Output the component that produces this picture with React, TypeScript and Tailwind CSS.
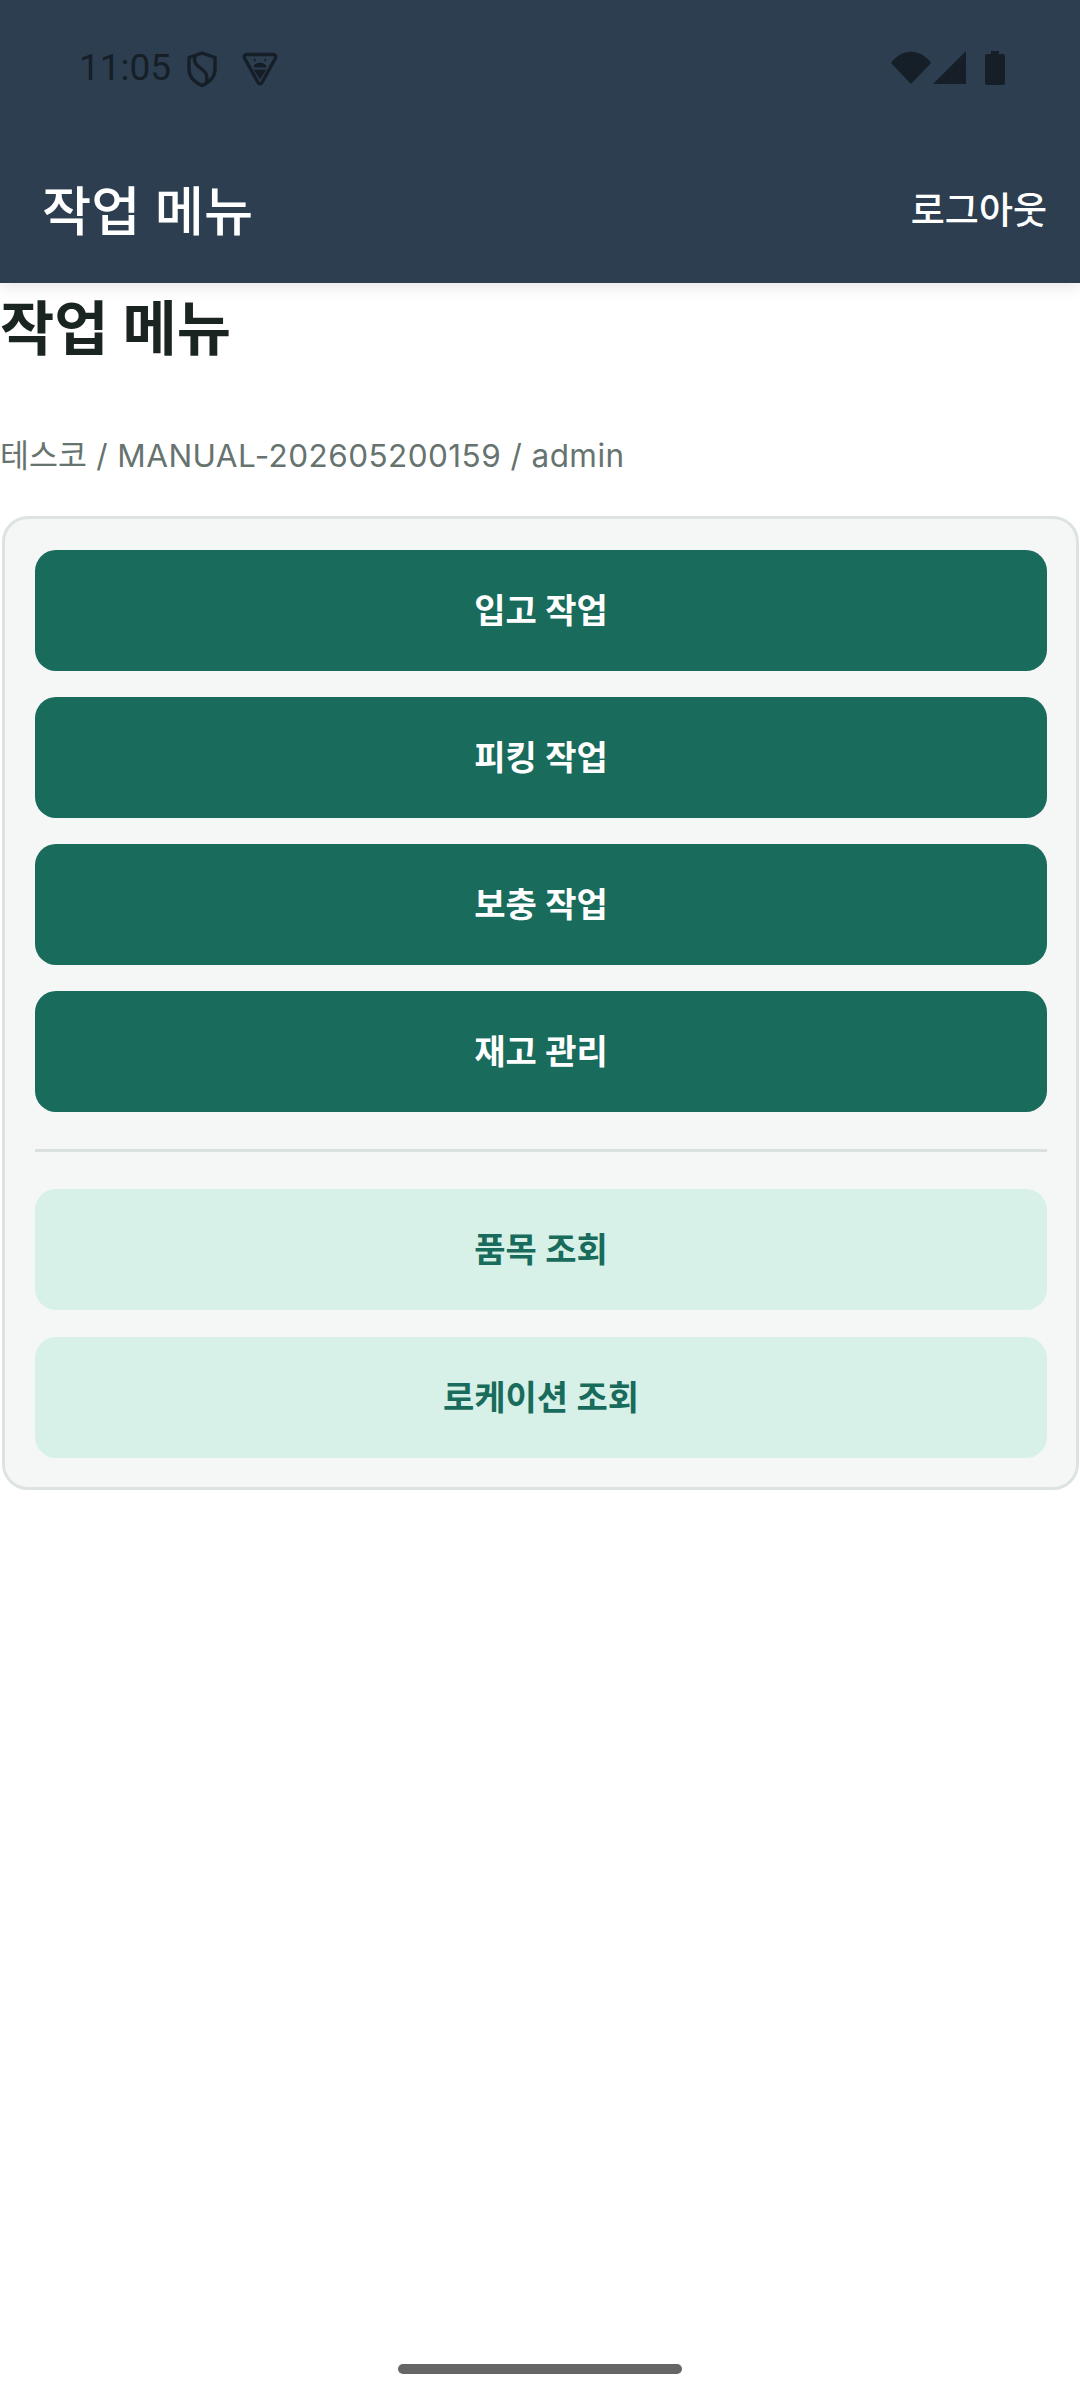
export default function App() {
  const primary = ["입고 작업", "피킹 작업", "보충 작업", "재고 관리"];
  const secondary = ["품목 조회", "로케이션 조회"];
  return (
    <div className="flex h-[2400px] w-[1080px] flex-col overflow-hidden bg-white font-['Inter','Noto_Sans_CJK_KR',sans-serif]">
      <header className="relative z-10 h-[283px] shrink-0 bg-[#2c3e50] shadow-[0_5px_14px_rgba(0,0,0,0.09)]">
        <div className="flex h-[136px] items-start pt-[50px] pl-[79px] pr-[75px] text-[#161e27]">
          <span className="font-['Roboto',sans-serif] text-[37px] leading-[36px]">11:05</span>
          <svg className="ml-[15px] mt-[1px]" width="32" height="36" viewBox="0 0 32 36" fill="none" stroke="currentColor" strokeWidth="3.4" strokeLinejoin="round">
            <path d="M16 2 L29 6.5 V18 C29 26 23 31.5 16 34.5 C9 31.5 3 26 3 18 V6.5 Z" />
            <path d="M9 5 C7 13 12 15 17 19 C22 23 21 28 20.5 32" />
          </svg>
          <svg className="ml-[24px] mt-[2px]" width="36" height="34" viewBox="0 0 36 34" fill="none" stroke="currentColor">
            <path d="M4.5 2.5 H31.5 C33.5 2.5 34.3 4.5 33.5 6 L20 30.5 C19 32.3 17 32.3 16 30.5 L2.5 6 C1.7 4.5 2.5 2.5 4.5 2.5 Z" strokeWidth="3.4" strokeLinejoin="round" />
            <path d="M11.5 15.5 C11.5 9 24.5 9 24.5 15.5 Z" fill="currentColor" stroke="none" />
            <path d="M11.5 17.5 H24.5 L18 27.5 Z" fill="currentColor" stroke="none" />
            <path d="M13.5 9 L12 7 M22.5 9 L24 7" strokeWidth="1.5" />
          </svg>
          <div className="ml-auto flex items-start">
            <svg className="mt-[1px]" width="40" height="33" viewBox="0 0 40 33" fill="currentColor">
              <path d="M0 12 C11 -3 29 -3 40 12 L20 33 Z" />
            </svg>
            <svg className="ml-[2px] mt-[1px]" width="33" height="33" viewBox="0 0 33 33" fill="currentColor">
              <path d="M33 0 V33 H0 Z" />
            </svg>
            <svg className="ml-[19px] mt-[1px]" width="20" height="34" viewBox="0 0 20 34" fill="currentColor">
              <path d="M6 0 H14 V3 H18 C19.2 3 20 3.8 20 5 V32 C20 33.2 19.2 34 18 34 H2 C0.8 34 0 33.2 0 32 V5 C0 3.8 0.8 3 2 3 H6 Z" />
            </svg>
          </div>
        </div>
        <div className="flex h-[147px] items-start justify-between pl-[42px] pr-[33px] text-white">
          <span className="mt-[41px] text-[53.5px] font-medium leading-[70px]">작업 메뉴</span>
          <span className="mt-[50px] text-[37px] font-medium leading-[50px]">로그아웃</span>
        </div>
      </header>
      <main className="flex-1">
        <h1 className="mt-[8px] text-[59px] font-bold leading-[76px] text-[#1a2421]">작업 메뉴</h1>
        <p className="mt-[67px] text-[31.5px] tracking-[0.44px] leading-[44px] text-[#66736f]">
          <span className="tracking-normal">테스코</span> / MANUAL-202605200159 / admin
        </p>
        <section className="ml-[2px] mr-[1px] mt-[38px] flex flex-col gap-[37px] rounded-[26px] border-[3px] border-[#dce3e1] bg-[#f5f7f6] pl-[30px] pr-[29px] pt-[30.5px] pb-[29px]">
          <div className="flex flex-col gap-[26.3px]">
            {primary.map((t) => (
              <button key={t} className="flex h-[121px] items-center justify-center rounded-[21px] bg-[#196b5b] text-[34px] font-semibold text-white">
                {t}
              </button>
            ))}
          </div>
          <div className="h-[3px] bg-[#d9e0de]" />
          <div className="flex flex-col gap-[26.3px]">
            {secondary.map((t) => (
              <button key={t} className="flex h-[121px] items-center justify-center rounded-[21px] bg-[#d7f1e8] text-[34px] font-semibold text-[#196b5b]">
                {t}
              </button>
            ))}
          </div>
        </section>
      </main>
      <footer className="flex h-[36px] shrink-0 justify-center">
        <div className="h-[10px] w-[284px] rounded-full bg-[#666666]" />
      </footer>
    </div>
  );
}
